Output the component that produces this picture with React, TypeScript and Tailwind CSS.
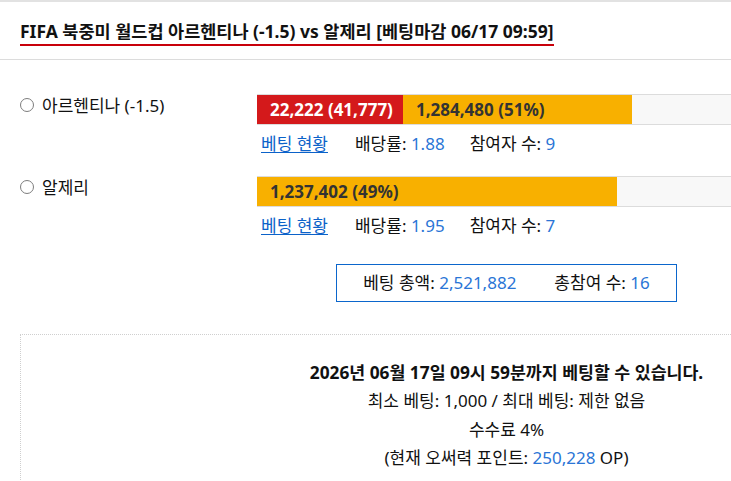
import React from "react";

const FONT = '"Noto Sans", "Noto Sans CJK KR", sans-serif';

type Option = {
  name: string;
  segments: { label: string; width: number; color: string; text: string }[];
  odds: string;
  count: number;
};

const options: Option[] = [
  {
    name: "아르헨티나 (-1.5)",
    segments: [
      { label: "22,222 (41,777)", width: 146, color: "bg-[#d4191b]", text: "text-white" },
      { label: "1,284,480 (51%)", width: 229, color: "bg-[#f8b000]", text: "text-[#333]" },
    ],
    odds: "1.88",
    count: 9,
  },
  {
    name: "알제리",
    segments: [{ label: "1,237,402 (49%)", width: 360, color: "bg-[#f8b000]", text: "text-[#333]" }],
    odds: "1.95",
    count: 7,
  },
];

function Radio() {
  return <span className="mt-[1px] inline-block h-[14px] w-[14px] shrink-0 rounded-full border border-[#7d7d7d] bg-white" />;
}

function OptionRow({ o }: { o: Option }) {
  return (
    <div className="flex">
      <div className="flex w-[237px] shrink-0 items-start gap-[8px] pt-[3px]">
        <Radio />
        <span className="-mt-[1px] text-[17px] leading-[20px] text-[#111]">{o.name}</span>
      </div>
      <div className="flex-1">
        <div className="flex h-[31px] border-y border-[#dcdcdc] bg-[#f8f8f8]">
          {o.segments.map((s) => (
            <div
              key={s.label}
              className={`${s.color} ${s.text} flex items-center whitespace-nowrap pl-[13px] text-[17px] font-bold`}
              style={{ width: s.width }}
            >
              {s.label}
            </div>
          ))}
        </div>
        <div className="flex items-center pl-[4px] pt-[8px] text-[17px] leading-[22px] text-[#111]">
          <a href="#" className="text-[#0b62c9] underline underline-offset-2">
            베팅 현황
          </a>
          <span className="ml-[27px]">
            배당률: <span className="text-[#2a75d6]">{o.odds}</span>
          </span>
          <span className="ml-[25px]">
            참여자 수: <span className="text-[#2a75d6]">{o.count}</span>
          </span>
        </div>
      </div>
    </div>
  );
}

export default function App() {
  return (
    <div className="h-[481px] w-[731px] overflow-hidden bg-white" style={{ fontFamily: FONT }}>
      <div className="w-[1013px]">
        <div className="border-t-2 border-[#e2e2e2]" />
        <div className="border-b border-[#dcdcdc] px-[20px] pt-[18px] pb-[13px]">
          <h1 className="inline-block whitespace-nowrap border-b-2 border-[#c8000a] pb-[3px] text-[17.5px] font-bold leading-[20px] text-[#111]">
            FIFA 북중미 월드컵 아르헨티나 (-1.5) vs 알제리 [베팅마감 06/17 09:59]
          </h1>
        </div>

        <div className="px-[20px] pt-[34px]">
          <div className="flex flex-col gap-[21px]">
            {options.map((o) => (
              <OptionRow key={o.name} o={o} />
            ))}
          </div>

          <div className="mt-[27px] flex justify-center">
            <div className="flex h-[38px] w-[341px] items-center justify-center gap-[38px] border border-[#0b66cc] text-[17px] text-[#111]">
              <span>
                베팅 총액: <span className="text-[#2a75d6]">2,521,882</span>
              </span>
              <span>
                총참여 수: <span className="text-[#2a75d6]">16</span>
              </span>
            </div>
          </div>

          <div className="mt-[32px] h-[200px] border border-dotted border-[#cfcfcf] pt-[24px] text-center text-[17px] leading-[28.3px] text-[#111]">
            <p className="text-[17.3px] font-bold">2026년 06월 17일 09시 59분까지 베팅할 수 있습니다.</p>
            <p>최소 베팅: 1,000 / 최대 베팅: 제한 없음</p>
            <p>수수료 4%</p>
            <p>
              (현재 오써력 포인트: <span className="text-[#2a75d6]">250,228</span> OP)
            </p>
          </div>
        </div>
      </div>
    </div>
  );
}
